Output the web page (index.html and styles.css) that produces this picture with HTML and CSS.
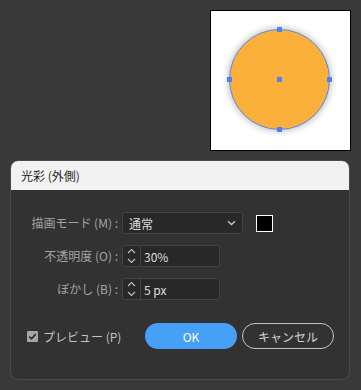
FILE: index.html
```html
<!DOCTYPE html>
<html lang="ja">
<head>
<meta charset="utf-8">
<link rel="stylesheet" href="styles.css">
</head>
<body>
<div class="stage">
  <div class="artboard">
    <svg width="139" height="139" viewBox="0 0 139 139">
      <defs>
        <filter id="glow" x="-30%" y="-30%" width="160%" height="160%">
          <feGaussianBlur stdDeviation="3"/>
        </filter>
      </defs>
      <circle cx="68.5" cy="68.5" r="52" fill="#000" opacity="0.22" filter="url(#glow)"/>
      <circle cx="68.5" cy="68.5" r="50" fill="#fbb03b" stroke="#5b86f2" stroke-width="1"/>
      <rect x="66" y="16" width="5" height="5" fill="#4f7ff2"/>
      <rect x="66" y="116" width="5" height="5" fill="#4f7ff2"/>
      <rect x="16" y="66" width="5" height="5" fill="#4f7ff2"/>
      <rect x="116" y="66" width="5" height="5" fill="#4f7ff2"/>
      <rect x="66" y="66" width="5" height="5" fill="#4f7ff2"/>
    </svg>
  </div>
</div>
<div class="dialog">
  <div class="dialog-header">光彩 (外側)</div>
  <div class="dialog-body">
    <div class="form">
      <label class="lbl">描画モード (M) :</label>
      <div class="select">
        <span>通常</span>
        <svg class="chev" width="9" height="6" viewBox="0 0 9 6"><path d="M1 1.2 L4.5 4.5 L8 1.2" fill="none" stroke="#c8c8c8" stroke-width="1.3"/></svg>
      </div>
      <div class="swatch"></div>

      <label class="lbl">不透明度 (O) :</label>
      <div class="spin">
        <div class="spin-arrows">
          <svg width="9" height="18" viewBox="0 0 9 18"><path d="M1 6 L4.5 2.5 L8 6 M1 12 L4.5 15.5 L8 12" fill="none" stroke="#bdbdbd" stroke-width="1.2"/></svg>
        </div>
        <span class="spin-val">30%</span>
      </div>
      <div></div>

      <label class="lbl">ぼかし (B) :</label>
      <div class="spin">
        <div class="spin-arrows">
          <svg width="9" height="18" viewBox="0 0 9 18"><path d="M1 6 L4.5 2.5 L8 6 M1 12 L4.5 15.5 L8 12" fill="none" stroke="#bdbdbd" stroke-width="1.2"/></svg>
        </div>
        <span class="spin-val">5 px</span>
      </div>
      <div></div>
    </div>
    <div class="actions">
      <label class="preview">
        <span class="check"><svg width="11" height="11" viewBox="0 0 11 11"><path d="M2.3 5.6 L4.5 7.8 L8.8 3" fill="none" stroke="#2e2e2e" stroke-width="1.8"/></svg></span>
        <span>プレビュー (P)</span>
      </label>
      <button class="btn btn-ok">OK</button>
      <button class="btn btn-cancel">キャンセル</button>
    </div>
  </div>
</div>
</body>
</html>
```

FILE: styles.css
```css
* { box-sizing: border-box; }
html, body {
  margin: 0;
  padding: 0;
  background: #393939;
  width: 361px;
  height: 390px;
  overflow: hidden;
  font-family: "Noto Sans CJK JP", "Noto Sans", sans-serif;
  font-size: 12px;
}
.stage {
  display: flex;
  justify-content: flex-end;
  padding: 10px 10px 0 0;
}
.artboard {
  width: 141px;
  height: 141px;
  background: #fff;
  border: 1px solid #000;
}
.artboard svg { display: block; }
.dialog {
  margin: 9px 0 0 10px;
  width: 340px;
  height: 220px;
  background: #323232;
  border: 1px solid #4a4a4a;
  border-radius: 8px;
  overflow: hidden;
}
.dialog-header {
  height: 29px;
  background: #f2f2f2;
  color: #1e1e1e;
  font-size: 12px;
  line-height: 29px;
  padding-left: 10px;
}
.dialog-body {
  padding: 22px 0 0 0;
}
.form {
  display: grid;
  grid-template-columns: 107px 121px auto;
  column-gap: 4px;
  row-gap: 11px;
  align-items: center;
}
.lbl {
  text-align: right;
  color: #a3a3a3;
  white-space: nowrap;
  line-height: 22px;
}
.select {
  height: 22px;
  background: #282828;
  border: 1px solid #434343;
  border-radius: 3px;
  display: flex;
  align-items: center;
  justify-content: space-between;
  padding: 0 6px 0 6px;
  color: #dedede;
}
.chev { display: block; }
.swatch {
  margin-left: 9px;
  width: 17px;
  height: 17px;
  background: #000;
  border: 1px solid #fff;
}
.spin {
  width: 98px;
  height: 22px;
  background: #282828;
  border: 1px solid #434343;
  border-radius: 3px;
  display: flex;
  align-items: center;
}
.spin-arrows {
  width: 18px;
  height: 100%;
  border-right: 1px solid #434343;
  display: flex;
  align-items: center;
  justify-content: center;
}
.spin-arrows svg { display: block; }
.spin-val {
  padding-left: 3px;
  color: #dedede;
}
.actions {
  display: flex;
  align-items: center;
  margin-top: 23px;
  padding-left: 16px;
}
.preview {
  display: flex;
  align-items: center;
  gap: 5px;
  color: #c4c4c4;
  width: 118px;
}
.check {
  width: 11px;
  height: 11px;
  background: #a6a6a6;
  border-radius: 1px;
  display: block;
}
.check svg { display: block; }
.btn {
  height: 26px;
  border-radius: 13px;
  font-family: "Noto Sans CJK JP", "Noto Sans", sans-serif;
  font-size: 12px;
  padding: 0;
}
.btn-ok {
  width: 92px;
  background: #46a0f5;
  border: none;
  color: #fff;
}
.btn-cancel {
  width: 92px;
  margin-left: 5px;
  background: transparent;
  border: 1.5px solid #c2c2c2;
  color: #d4d4d4;
}
```
